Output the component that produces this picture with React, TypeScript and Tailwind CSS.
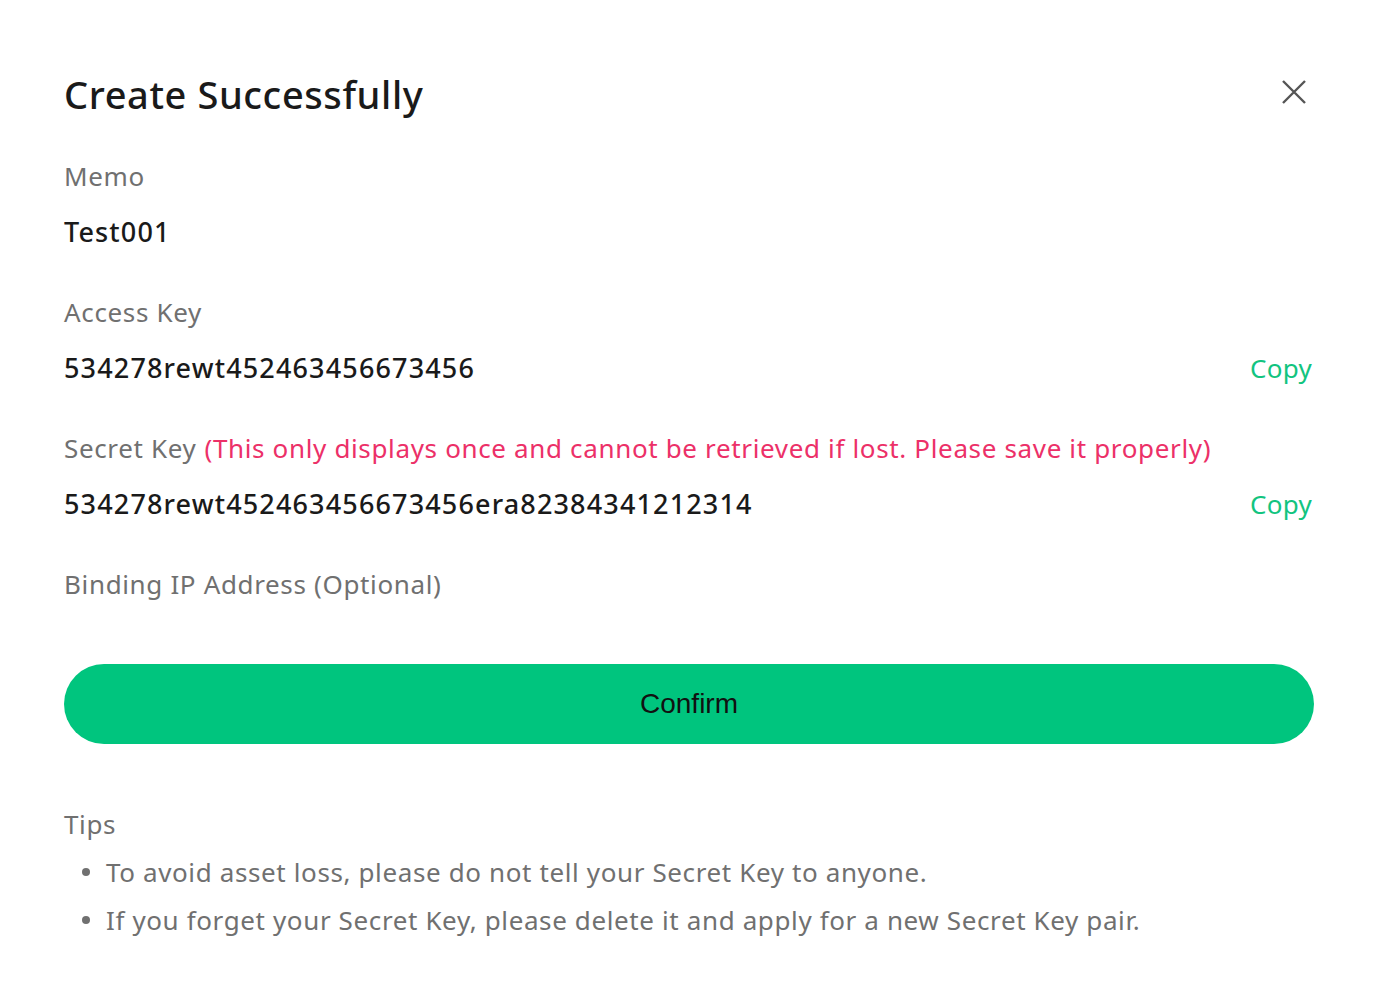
import React from "react";

const Field = ({ label, extra, value, copy }: { label: string; extra?: string; value?: string; copy?: boolean }) => (
  <div className="flex flex-col">
    <div className="h-[56px] flex items-center text-[26px] text-[#707070] tracking-[0.65px]">
      <span>{label}</span>
      {extra && <span className="ml-[8px] text-[#EC3068]">{extra}</span>}
    </div>
    {value !== undefined && (
      <div className="h-[56px] flex items-center justify-between">
        <span className="text-[27px] text-[#1a1a1a] font-medium tracking-[1.15px]">{value}</span>
        {copy && <span className="text-[26px] text-[#12C47F] tracking-[0.3px] mr-[2px]">Copy</span>}
      </div>
    )}
  </div>
);

export default function App() {
  return (
    <div className="w-[1378px] h-[1008px] bg-white" style={{ fontFamily: '"Noto Sans", "Open Sans", sans-serif' }}>
      <div className="pl-[64px] pr-[64px] pt-[62px]">
        <div className="flex items-center justify-between h-[64px]">
          <h1 className="text-[38px] text-[#1a1a1a] font-medium tracking-[0.6px]">Create Successfully</h1>
          <svg width="28" height="28" viewBox="0 0 28 28" className="mr-[6px] -mt-[4px]">
            <path d="M3 3 L25 25 M25 3 L3 25" stroke="#555" strokeWidth="2.4" strokeLinecap="butt" />
          </svg>
        </div>
        <div className="mt-[22px] flex flex-col gap-[24px]">
          <Field label="Memo" value="Test001" />
          <Field label="Access Key" value="534278rewt452463456673456" copy />
          <Field
            label="Secret Key"
            extra="(This only displays once and cannot be retrieved if lost. Please save it properly)"
            value="534278rewt452463456673456era82384341212314"
            copy
          />
          <Field label="Binding IP Address (Optional)" />
        </div>
        <button
          className="mt-[52px] w-full h-[80px] rounded-full bg-[#00C57E] text-[28px] text-[#111]"
          style={{ fontFamily: '"Liberation Sans", Arial, sans-serif' }}
        >
          Confirm
        </button>
        <div className="mt-[62px] text-[26px] text-[#707070] tracking-[0.62px]">
          <div className="h-[36px] flex items-center">Tips</div>
          <ul className="mt-[12px] flex flex-col gap-[12px] pl-[18px]">
            <li className="flex items-center h-[36px]">
              <span className="w-[8px] h-[8px] rounded-full bg-[#707070] mr-[16px]"></span>
              To avoid asset loss, please do not tell your Secret Key to anyone.
            </li>
            <li className="flex items-center h-[36px]">
              <span className="w-[8px] h-[8px] rounded-full bg-[#707070] mr-[16px]"></span>
              If you forget your Secret Key, please delete it and apply for a new Secret Key pair.
            </li>
          </ul>
        </div>
      </div>
    </div>
  );
}
